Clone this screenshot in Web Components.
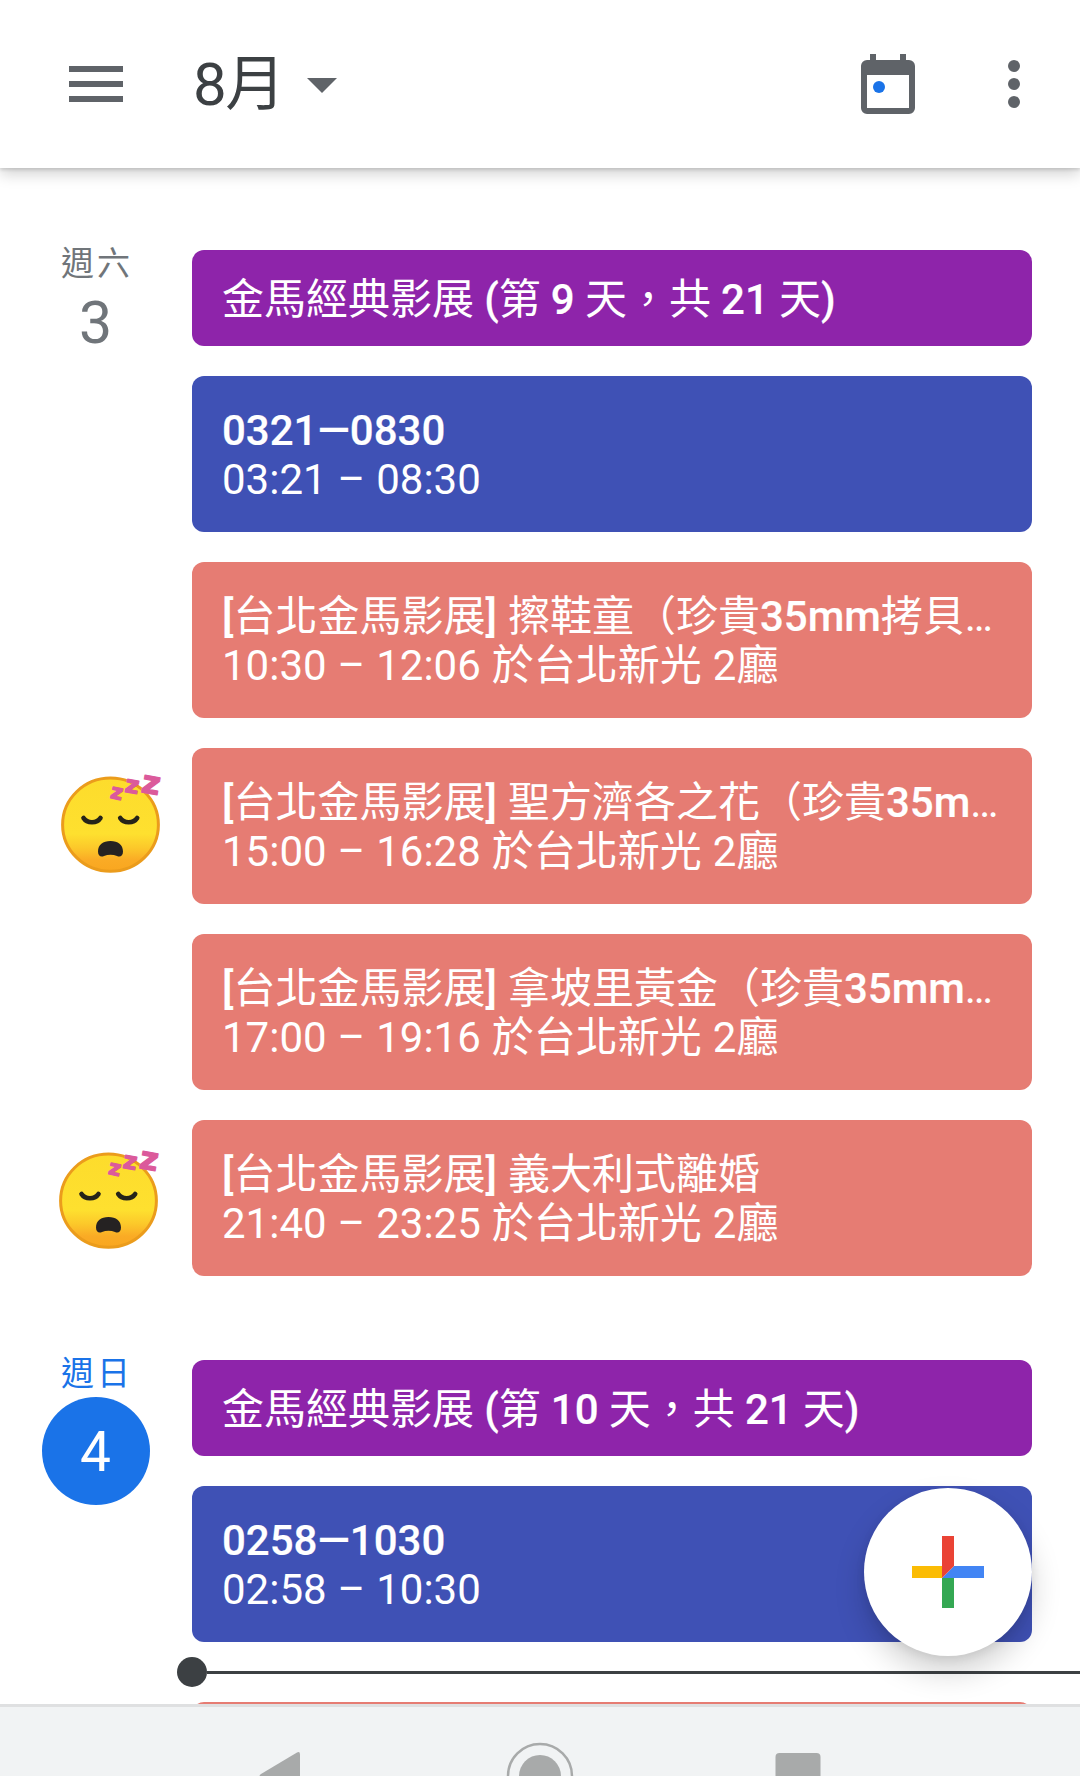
<!DOCTYPE html>
<html lang="zh-Hant">
<head>
<meta charset="utf-8">
<title>8月</title>
<style>
    html, body {
        margin: 0;
        height: 1776px;
        overflow: hidden;
    }
    body {
        position: relative;
        display: flex;
        flex-direction: column;
        background: #fff;
        font-family: Roboto, "Noto Sans CJK TC", sans-serif;
    }
</style>
</head>
<body>
<app-bar>8月</app-bar>
<agenda-list>
    <agenda-day weekday="週六" date="3">
        <sleepy-sticker slot="gutter" style="margin:415px 0 0 60px"></sleepy-sticker>
        <sleepy-sticker slot="gutter" style="margin:272px 0 0 58px"></sleepy-sticker>
        <event-card color="grape" allday name="金馬經典影展 (第 9 天，共 21 天)"></event-card>
        <event-card color="blueberry" name="0321—0830">03:21 – 08:30</event-card>
        <event-card color="flamingo" name="[台北金馬影展] 擦鞋童（珍貴35mm拷貝…">10:30 – 12:06 於台北新光 2廳</event-card>
        <event-card color="flamingo" name="[台北金馬影展] 聖方濟各之花（珍貴35m…">15:00 – 16:28 於台北新光 2廳</event-card>
        <event-card color="flamingo" name="[台北金馬影展] 拿坡里黃金（珍貴35mm…">17:00 – 19:16 於台北新光 2廳</event-card>
        <event-card color="flamingo" name="[台北金馬影展] 義大利式離婚">21:40 – 23:25 於台北新光 2廳</event-card>
    </agenda-day>
    <agenda-day weekday="週日" date="4" today>
        <event-card color="grape" allday name="金馬經典影展 (第 10 天，共 21 天)"></event-card>
        <event-card color="blueberry" name="0258—1030">02:58 – 10:30</event-card>
        <now-line></now-line>
        <event-card color="flamingo" name=""></event-card>
    </agenda-day>
</agenda-list>
<add-button></add-button>
<nav-bar></nav-bar>

<script>
class AppBar extends HTMLElement {
    constructor() {
        super();
        const shadowRoot = this.attachShadow({mode: "open"});
        shadowRoot.innerHTML = `
        <style>
            :host {
                position: relative;
                z-index: 1;
                box-sizing: border-box;
                flex: none;
                display: flex;
                align-items: center;
                height: 168px;
                padding: 0 30px 0 60px;
                background: #fff;
                box-shadow: 0 2px 3px rgba(0,0,0,.12), 0 6px 14px rgba(0,0,0,.18);
                color: #3c4043;
            }
            svg {
                flex: none;
                width: 72px;
                height: 72px;
                fill: #5f6368;
            }
            .title {
                margin-left: 61px;
                padding-top: 2px;
                font-size: 60px;
                line-height: 72px;
                letter-spacing: -1.5px;
            }
            .arrow {
                margin-left: 2px;
            }
            .today {
                margin-left: auto;
            }
            .more {
                margin-left: 54px;
            }
        </style>
        <svg viewBox="0 0 24 24"><path d="M3 6h18v2H3zM3 11h18v2H3zM3 16h18v2H3z"/></svg>
        <span class="title"><slot></slot></span>
        <svg class="arrow" viewBox="0 0 24 24"><path d="M7 10h10l-5 5z"/></svg>
        <svg class="today" viewBox="0 0 24 24">
            <path fill-rule="evenodd" d="M6 2h2v2h8V2h2v2h1a2 2 0 0 1 2 2v14a2 2 0 0 1-2 2H5a2 2 0 0 1-2-2V6a2 2 0 0 1 2-2h1zM5 9v11h14V9z"/>
            <circle cx="9" cy="13" r="2" fill="#1a73e8"/>
        </svg>
        <svg class="more" viewBox="0 0 24 24"><circle cx="12" cy="6" r="2"/><circle cx="12" cy="12" r="2"/><circle cx="12" cy="18" r="2"/></svg>
        `;
    }
}

class AgendaList extends HTMLElement {
    constructor() {
        super();
        const shadowRoot = this.attachShadow({mode: "open"});
        shadowRoot.innerHTML = `
        <style>
            :host {
                flex: 1;
                min-height: 0;
                box-sizing: border-box;
                display: flex;
                flex-direction: column;
                gap: 84px;
                padding-top: 82px;
                overflow: hidden;
            }
        </style>
        <slot></slot>
        `;
    }
}

class AgendaDay extends HTMLElement {
    constructor() {
        super();
        const shadowRoot = this.attachShadow({mode: "open"});
        shadowRoot.innerHTML = `
        <style>
            :host {
                flex: none;
                display: grid;
                grid-template-columns: 192px 840px;
                align-items: start;
                color: #70757a;
            }
            .gutter {
                display: flex;
                flex-direction: column;
                height: 0;
                margin-top: -6px;
            }
            .weekday, .date {
                flex: none;
                text-align: center;
            }
            .weekday {
                padding-left: 2px;
                font-size: 33px;
                line-height: 39px;
                letter-spacing: 3px;
            }
            .date {
                width: 191px;
                height: 66px;
                margin-top: 6px;
                font-size: 59px;
                line-height: 67px;
            }
            .events {
                display: flex;
                flex-direction: column;
                gap: 30px;
            }
            :host([today]) .weekday {
                color: #1a73e8;
            }
            :host([today]) .date {
                width: 108px;
                height: 108px;
                margin: 4px 0 0 42px;
                border-radius: 50%;
                background: #1a73e8;
                color: #fff;
                font-size: 55px;
                line-height: 110px;
                text-indent: -1px;
            }
        </style>
        <div class="gutter">
            <div class="weekday"></div>
            <div class="date"></div>
            <slot name="gutter"></slot>
        </div>
        <div class="events"><slot></slot></div>
        `;
    }

    connectedCallback() {
        this.shadowRoot.querySelector(".weekday").textContent = this.getAttribute("weekday");
        this.shadowRoot.querySelector(".date").textContent = this.getAttribute("date");
    }
}

class EventCard extends HTMLElement {
    constructor() {
        super();
        const shadowRoot = this.attachShadow({mode: "open"});
        shadowRoot.innerHTML = `
        <style>
            :host {
                box-sizing: border-box;
                display: block;
                height: 156px;
                padding: 30px;
                border-radius: 12px;
                color: #fff;
                font-size: 42px;
                line-height: 49px;
                white-space: nowrap;
                word-spacing: .6px;
            }
            :host([allday]) {
                height: 96px;
                padding: 25px 30px;
                word-spacing: -.3px;
            }
            :host([color="grape"]) {
                background: #8e24aa;
            }
            :host([color="blueberry"]) {
                background: #3f51b5;
            }
            :host([color="flamingo"]) {
                background: #e67c73;
            }
            b {
                font-weight: 500;
                -webkit-text-stroke: .2px #fff;
            }
        </style>
        <div class="title"></div>
        <div class="time"><slot></slot></div>
        `;
    }

    connectedCallback() {
        // only latin runs are medium, han characters stay regular
        this.shadowRoot.querySelector(".title").innerHTML =
            this.getAttribute("name").replace(/[ -~—]+/g, "<b>$&</b>");
    }
}

class NowLine extends HTMLElement {
    constructor() {
        super();
        const shadowRoot = this.attachShadow({mode: "open"});
        shadowRoot.innerHTML = `
        <style>
            :host {
                display: flex;
                align-items: center;
                height: 0;
                margin: 0 -48px 0 -15px;
            }
            .dot {
                flex: none;
                width: 30px;
                height: 30px;
                border-radius: 50%;
                background: #3c4043;
            }
            .line {
                flex: 1;
                height: 3px;
                background: #3c4043;
            }
        </style>
        <div class="dot"></div><div class="line"></div>
        `;
    }
}

class SleepySticker extends HTMLElement {
    constructor() {
        super();
        const shadowRoot = this.attachShadow({mode: "open"});
        shadowRoot.innerHTML = `
        <style>
            :host {
                flex: none;
                display: block;
                width: 104px;
                height: 104px;
            }
            svg {
                display: block;
                overflow: visible;
            }
            text {
                font-family: "DejaVu Sans", sans-serif;
                font-weight: bold;
                text-anchor: middle;
                fill: #db5a9b;
                stroke: #db5a9b;
                stroke-width: 1.2;
                stroke-linejoin: round;
            }
        </style>
        <svg width="104" height="104" viewBox="0 0 104 104">
            <defs>
                <linearGradient id="face" x1="0" y1="0" x2="0" y2="1">
                    <stop offset="0" stop-color="#fddc2c"/>
                    <stop offset=".6" stop-color="#fee02f"/>
                    <stop offset=".75" stop-color="#fcc82a"/>
                    <stop offset=".88" stop-color="#faab25"/>
                    <stop offset="1" stop-color="#f9a61f"/>
                </linearGradient>
            </defs>
            <ellipse cx="50.5" cy="54.7" rx="47.9" ry="46.6" fill="url(#face)" stroke="#eb9c1c" stroke-width="3"/>
            <path d="M23.5 48c3.5 5.6 13.5 5.6 17 0M60.2 48c3.5 5.6 13.500 5.600 17 0" fill="none" stroke="#252319" stroke-width="4.6" stroke-linecap="round"/>
            <path d="M38 81.500c0-6.500 5-10.500 12.500-10.500S63 75 63 81.500c0 4.500-3 6-6 4.500-4-1.600-9-1.600-13 0-3 1.500-6 0-6-4.500z" fill="#252222"/>
            <text transform="translate(55.5 29) rotate(12)" font-size="21">z</text>
            <text transform="translate(71 23) rotate(10)" font-size="24">z</text>
            <text transform="translate(89.5 23.5) rotate(10)" font-size="32">z</text>
        </svg>
        `;
    }
}

class AddButton extends HTMLElement {
    constructor() {
        super();
        const shadowRoot = this.attachShadow({mode: "open"});
        shadowRoot.innerHTML = `
        <style>
            :host {
                position: absolute;
                right: 48px;
                bottom: 120px;
                display: grid;
                place-items: center;
                width: 168px;
                height: 168px;
                border-radius: 50%;
                background: #fff;
                box-shadow: 0 16px 30px rgba(0,0,0,.18), 0 3px 10px rgba(0,0,0,.08);
            }
        </style>
        <svg width="72" height="72" viewBox="0 0 12 12">
            <path fill="#fbbc04" d="M0 5h5v2H0z"/>
            <path fill="#34a853" d="M5 7h2v5H5z"/>
            <path fill="#4285f4" d="M7 5h5v2H5z"/>
            <path fill="#ea4335" d="M5 0h2v5L5 7z"/>
        </svg>
        `;
    }
}

class NavBar extends HTMLElement {
    constructor() {
        super();
        const shadowRoot = this.attachShadow({mode: "open"});
        shadowRoot.innerHTML = `
        <style>
            :host {
                position: relative;
                box-sizing: border-box;
                flex: none;
                display: flex;
                justify-content: center;
                gap: 188px;
                height: 72px;
                padding-top: 33px;
                border-top: 3px solid #dfe0e1;
                background: #f1f3f4;
                overflow: hidden;
            }
            svg {
                flex: none;
                width: 72px;
                height: 72px;
                fill: #a8aaaa;
            }
        </style>
        <svg viewBox="0 0 72 72"><path d="M53 12.5q3-1.5 3 2v43q0 3.5-3 2L17 38q-3-2 0-4z"/></svg>
        <svg viewBox="0 0 72 72"><circle cx="36" cy="36" r="21"/><circle cx="36" cy="36" r="32" fill="none" stroke="#a8aaaa" stroke-width="2.5"/></svg>
        <svg viewBox="0 0 72 72"><rect x="11.5" y="13" width="45" height="45" rx="4"/></svg>
        `;
    }
}

customElements.define('app-bar', AppBar);
customElements.define('agenda-list', AgendaList);
customElements.define('agenda-day', AgendaDay);
customElements.define('event-card', EventCard);
customElements.define('now-line', NowLine);
customElements.define('sleepy-sticker', SleepySticker);
customElements.define('add-button', AddButton);
customElements.define('nav-bar', NavBar);
</script>
</body>
</html>
